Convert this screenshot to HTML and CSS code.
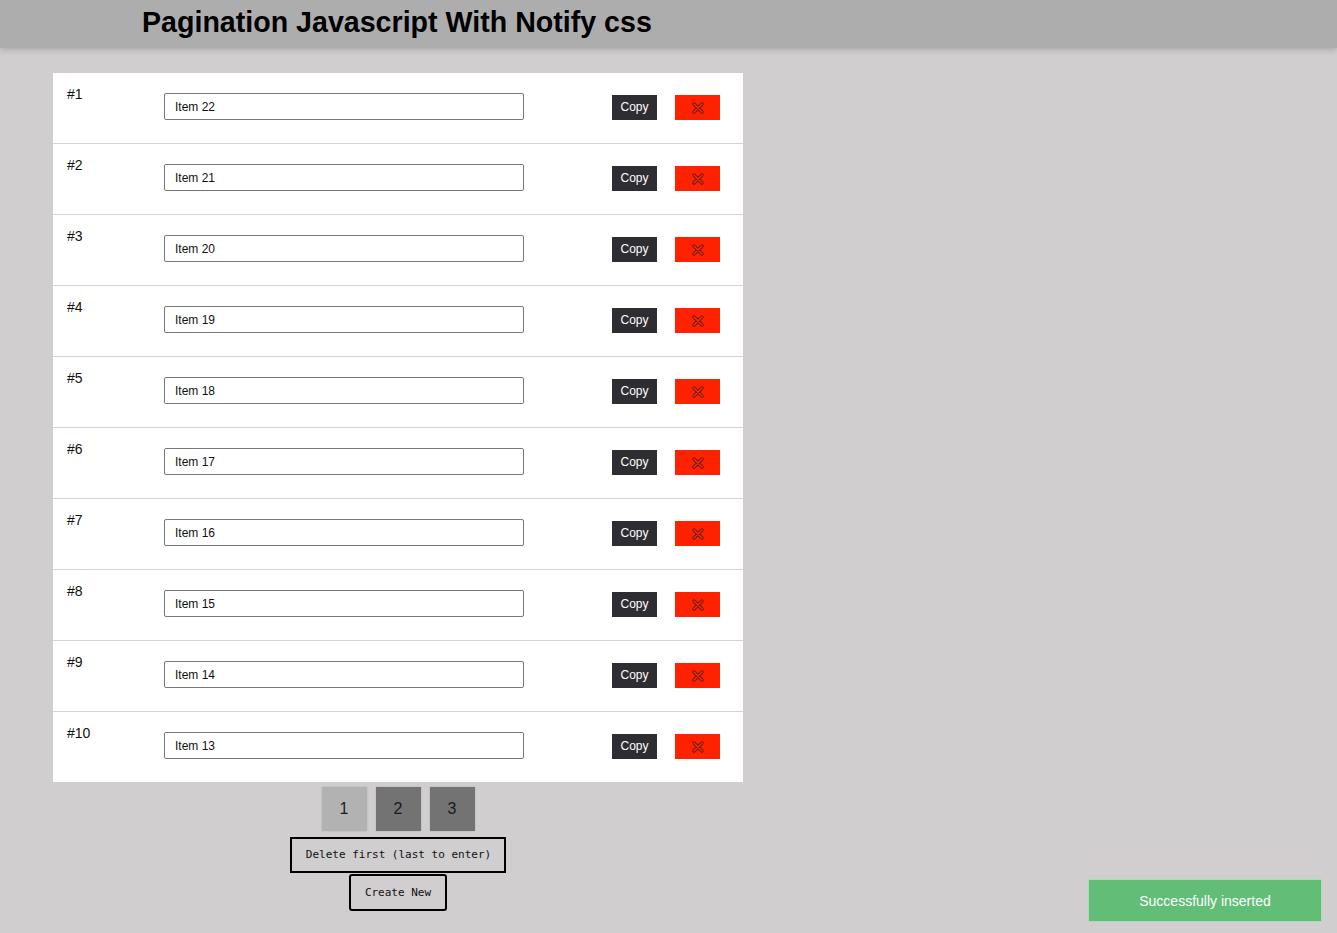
FILE: index.html
```html
<!DOCTYPE html>
<html>
<head>
<meta charset="utf-8">
<title>Pagination</title>
<link rel="stylesheet" href="styles.css">
</head>
<body>
<header class="topbar"><h1 class="title">Pagination Javascript With Notify css</h1></header>
<main class="wrap">
  <section class="card">
    <div class="row"><span class="num">#1</span><input class="field" value="Item 22"><span class="grow"></span><button class="copy">Copy</button><button class="del"><svg viewBox="0 0 14 14" width="14" height="14"><path d="M3 3 L11 11 M11 3 L3 11" stroke="#7a1608" stroke-width="3.4" stroke-linecap="round"/><path d="M3 3 L11 11 M11 3 L3 11" stroke="#f0341a" stroke-width="1.4" stroke-linecap="round"/></svg></button></div>
    <div class="row"><span class="num">#2</span><input class="field" value="Item 21"><span class="grow"></span><button class="copy">Copy</button><button class="del"><svg viewBox="0 0 14 14" width="14" height="14"><path d="M3 3 L11 11 M11 3 L3 11" stroke="#7a1608" stroke-width="3.4" stroke-linecap="round"/><path d="M3 3 L11 11 M11 3 L3 11" stroke="#f0341a" stroke-width="1.4" stroke-linecap="round"/></svg></button></div>
    <div class="row"><span class="num">#3</span><input class="field" value="Item 20"><span class="grow"></span><button class="copy">Copy</button><button class="del"><svg viewBox="0 0 14 14" width="14" height="14"><path d="M3 3 L11 11 M11 3 L3 11" stroke="#7a1608" stroke-width="3.4" stroke-linecap="round"/><path d="M3 3 L11 11 M11 3 L3 11" stroke="#f0341a" stroke-width="1.4" stroke-linecap="round"/></svg></button></div>
    <div class="row"><span class="num">#4</span><input class="field" value="Item 19"><span class="grow"></span><button class="copy">Copy</button><button class="del"><svg viewBox="0 0 14 14" width="14" height="14"><path d="M3 3 L11 11 M11 3 L3 11" stroke="#7a1608" stroke-width="3.4" stroke-linecap="round"/><path d="M3 3 L11 11 M11 3 L3 11" stroke="#f0341a" stroke-width="1.4" stroke-linecap="round"/></svg></button></div>
    <div class="row"><span class="num">#5</span><input class="field" value="Item 18"><span class="grow"></span><button class="copy">Copy</button><button class="del"><svg viewBox="0 0 14 14" width="14" height="14"><path d="M3 3 L11 11 M11 3 L3 11" stroke="#7a1608" stroke-width="3.4" stroke-linecap="round"/><path d="M3 3 L11 11 M11 3 L3 11" stroke="#f0341a" stroke-width="1.4" stroke-linecap="round"/></svg></button></div>
    <div class="row"><span class="num">#6</span><input class="field" value="Item 17"><span class="grow"></span><button class="copy">Copy</button><button class="del"><svg viewBox="0 0 14 14" width="14" height="14"><path d="M3 3 L11 11 M11 3 L3 11" stroke="#7a1608" stroke-width="3.4" stroke-linecap="round"/><path d="M3 3 L11 11 M11 3 L3 11" stroke="#f0341a" stroke-width="1.4" stroke-linecap="round"/></svg></button></div>
    <div class="row"><span class="num">#7</span><input class="field" value="Item 16"><span class="grow"></span><button class="copy">Copy</button><button class="del"><svg viewBox="0 0 14 14" width="14" height="14"><path d="M3 3 L11 11 M11 3 L3 11" stroke="#7a1608" stroke-width="3.4" stroke-linecap="round"/><path d="M3 3 L11 11 M11 3 L3 11" stroke="#f0341a" stroke-width="1.4" stroke-linecap="round"/></svg></button></div>
    <div class="row"><span class="num">#8</span><input class="field" value="Item 15"><span class="grow"></span><button class="copy">Copy</button><button class="del"><svg viewBox="0 0 14 14" width="14" height="14"><path d="M3 3 L11 11 M11 3 L3 11" stroke="#7a1608" stroke-width="3.4" stroke-linecap="round"/><path d="M3 3 L11 11 M11 3 L3 11" stroke="#f0341a" stroke-width="1.4" stroke-linecap="round"/></svg></button></div>
    <div class="row"><span class="num">#9</span><input class="field" value="Item 14"><span class="grow"></span><button class="copy">Copy</button><button class="del"><svg viewBox="0 0 14 14" width="14" height="14"><path d="M3 3 L11 11 M11 3 L3 11" stroke="#7a1608" stroke-width="3.4" stroke-linecap="round"/><path d="M3 3 L11 11 M11 3 L3 11" stroke="#f0341a" stroke-width="1.4" stroke-linecap="round"/></svg></button></div>
    <div class="row"><span class="num">#10</span><input class="field" value="Item 13"><span class="grow"></span><button class="copy">Copy</button><button class="del"><svg viewBox="0 0 14 14" width="14" height="14"><path d="M3 3 L11 11 M11 3 L3 11" stroke="#7a1608" stroke-width="3.4" stroke-linecap="round"/><path d="M3 3 L11 11 M11 3 L3 11" stroke="#f0341a" stroke-width="1.4" stroke-linecap="round"/></svg></button></div>
  </section>
  <nav class="pager">
    <button class="page page-active">1</button>
    <button class="page">2</button>
    <button class="page">3</button>
  </nav>
  <div class="actions">
    <button class="mono-btn">Delete first (last to enter)</button>
    <button class="mono-btn rounded">Create New</button>
  </div>
</main>
<div class="toast">Successfully inserted</div>
</body>
</html>
```
FILE: styles.css
```css
html, body {
  margin: 0;
  padding: 0;
}
body {
  background: #d0cece;
  font-family: "Liberation Sans", Arial, sans-serif;
  min-height: 933px;
}
.topbar {
  height: 48px;
  background: #aeadad;
  box-shadow: 0 2px 6px rgba(0,0,0,0.18);
  display: flex;
  align-items: flex-start;
  padding-left: 142px;
}
.title {
  margin: 0;
  font-size: 28.6px;
  font-weight: bold;
  color: #000;
  line-height: 44px;
}
.wrap {
  width: 690px;
  margin: 25px 0 0 53px;
}
.card {
  background: #fff;
}
.row {
  display: flex;
  align-items: flex-start;
  height: 70px;
  padding: 0 23px 0 14px;
  border-bottom: 1px solid #d4d4d4;
  box-sizing: content-box;
}
.row:last-child {
  border-bottom: none;
}
.num {
  width: 97px;
  font-size: 14px;
  color: #111;
  margin-top: 13px;
  line-height: 16px;
}
.field {
  width: 360px;
  height: 27px;
  box-sizing: border-box;
  margin: 20px 0 0 0;
  border: 1px solid #777;
  border-radius: 2px;
  padding: 0 10px;
  font-family: "Liberation Sans", Arial, sans-serif;
  font-size: 12px;
  color: #111;
  background: #fff;
  outline: none;
}
.grow {
  flex: 1;
}
.copy {
  width: 45px;
  height: 25px;
  margin-top: 22px;
  border: none;
  background: #2e2d32;
  color: #fff;
  font-family: "Liberation Sans", Arial, sans-serif;
  font-size: 12px;
  padding: 0 0 2px 0;
}
.del {
  width: 45px;
  height: 25px;
  margin: 22px 0 0 18px;
  border: none;
  background: #ff2200;
  padding: 0;
  display: flex;
  align-items: center;
  justify-content: center;
}
.pager {
  display: flex;
  justify-content: center;
  gap: 9px;
  margin-top: 5px;
}
.page {
  width: 45px;
  height: 44px;
  border: none;
  background: #737373;
  color: #1a1a1a;
  font-family: "Liberation Sans", Arial, sans-serif;
  font-size: 16px;
  padding: 0;
  box-shadow: 0 0 2px rgba(0,0,0,0.15);
}
.page-active {
  background: #b3b2b2;
}
.actions {
  display: flex;
  flex-direction: column;
  align-items: center;
  margin-top: 6px;
}
.mono-btn {
  font-family: "DejaVu Sans Mono", "Liberation Mono", monospace;
  font-size: 11px;
  line-height: 12px;
  padding: 10px 13px 10px 14px;
  border: 2px solid #000;
  background: #d0cece;
  color: #111;
  border-radius: 0;
}
.mono-btn.rounded {
  border-radius: 3px;
  margin-top: 1px;
  padding: 11px 14px 10px 14px;
}
.toast {
  position: fixed;
  right: 15px;
  bottom: 11px;
  width: 234px;
  height: 43px;
  box-sizing: border-box;
  background: #62bd77;
  border: 1px solid #a8dcb4;
  color: #fff;
  font-size: 14px;
  display: flex;
  align-items: center;
  justify-content: center;
}
```
